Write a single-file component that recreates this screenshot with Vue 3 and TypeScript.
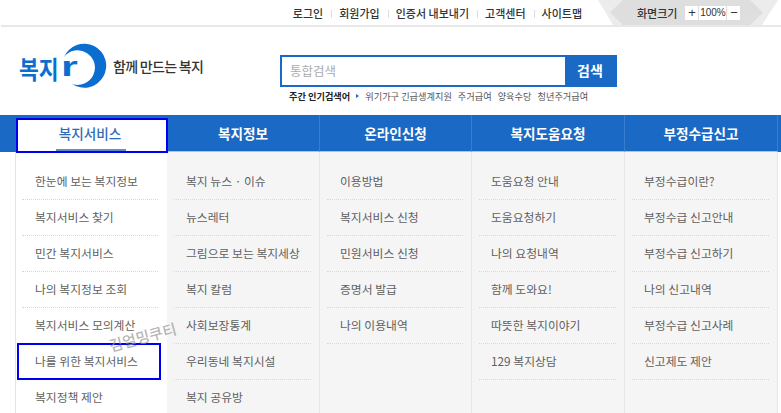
<script setup lang="ts">
const topLinks = ['로그인', '회원가입', '인증서 내보내기', '고객센터', '사이트맵']
const keywords = ['위기가구 긴급생계지원', '주거급여', '양육수당', '청년주거급여']
const columns = [
  { title: '복지서비스', width: 152, items: ['한눈에 보는 복지정보', '복지서비스 찾기', '민간 복지서비스', '나의 복지정보 조회', '복지서비스 모의계산', '나를 위한 복지서비스', '복지정책 제안'] },
  { title: '복지정보', width: 153, items: ['복지 뉴스 · 이슈', '뉴스레터', '그림으로 보는 복지세상', '복지 칼럼', '사회보장통계', '우리동네 복지시설', '복지 공유방'] },
  { title: '온라인신청', width: 152, items: ['이용방법', '복지서비스 신청', '민원서비스 신청', '증명서 발급', '나의 이용내역'] },
  { title: '복지도움요청', width: 153, items: ['도움요청 안내', '도움요청하기', '나의 요청내역', '함께 도와요!', '따뜻한 복지이야기', '129 복지상담'] },
  { title: '부정수급신고', width: 153, items: ['부정수급이란?', '부정수급 신고안내', '부정수급 신고하기', '나의 신고내역', '부정수급 신고사례', '신고제도 제안'] },
]
</script>

<template>
  <div class="page">
    <header class="topbar">
      <nav class="toplinks">
        <a v-for="l in topLinks" :key="l">{{ l }}</a>
      </nav>
      <div class="zoom">
        <svg class="ribbon" width="180" height="25" viewBox="0 0 180 25">
          <polygon points="0,0 180,0 164,25 15,25" fill="#ececec" />
          <polygon points="25,0 152,0 165,12.500 152,25 25,25 12,12.500" fill="#dedede" />
        </svg>
        <span class="zoom-label">화면크기</span>
        <span class="zoom-ctl"><b>+</b><i>100%</i><b>−</b></span>
      </div>
    </header>

    <section class="brand">
      <div class="logo">
        <svg width="95" height="52" viewBox="0 0 95 52">
          <path d="M49 17 A22 22 0 1 1 57 44 A17.300 17.300 0 1 0 49 17 Z" fill="#0a6ed1" />
          <text class="logo-word" transform="translate(4 39) scale(.98 1.12)">복지</text>
          <text class="logo-r" transform="translate(46 36) scale(1.6 1)">r</text>
        </svg>
        <span class="slogan">함께 만드는 복지</span>
      </div>
      <div class="search">
        <div class="search-box">
          <span class="search-input">통합검색</span>
          <span class="search-btn">검색</span>
        </div>
        <div class="popular">
          <strong>주간 인기검색어</strong>
          <em></em>
          <span v-for="k in keywords" :key="k">{{ k }}</span>
        </div>
      </div>
    </section>

    <nav class="gnb">
      <div
        v-for="(c, i) in columns"
        :key="c.title"
        class="gnb-col"
        :class="{ first: i === 0 }"
        :style="{ width: c.width + 'px' }"
      >
        <div class="gnb-title">{{ c.title }}</div>
        <ul class="menu">
          <li v-for="item in c.items" :key="item" :class="{ boxed: item === '나를 위한 복지서비스' }">{{ item }}</li>
        </ul>
      </div>
      <span class="stamp">김얼밍쿠티</span>
    </nav>
  </div>
</template>

<style>
html, body { margin: 0; background: #fff; overflow: hidden; }
</style>

<style scoped>
.page {
  width: 781px;
  height: 413px;
  overflow: hidden;
  font-family: "Noto Sans CJK KR", "Noto Sans", sans-serif;
  color: #444;
}
.topbar {
  height: 27px;
  box-sizing: border-box;
  border-bottom: 2px solid #e8e8e8;
  margin-left: 1px;
  display: flex;
  justify-content: flex-end;
  align-items: center;
}
.toplinks { display: flex; font-size: 11px; font-weight: 500; color: #333; margin-right: 8px; }
.toplinks a { padding: 0 8px; position: relative; }
.toplinks a + a::before {
  content: "";
  position: absolute;
  left: 0;
  top: 5px;
  height: 8px;
  width: 1px;
  background: #ddd;
}
.zoom {
  position: relative;
  width: 180px;
  height: 25px;
  margin-right: 3px;
  display: flex;
  align-items: center;
  gap: 8px;
  padding-left: 39px;
  box-sizing: border-box;
  font-size: 11px;
  font-weight: 500;
  color: #333;
}
.ribbon { position: absolute; left: 0; top: 0; }
.zoom-label, .zoom-ctl { position: relative; }
.zoom-ctl { display: flex; gap: 1px; }
.zoom-ctl b, .zoom-ctl i {
  background: #fff;
  height: 14px;
  line-height: 14px;
  font-style: normal;
  font-weight: 400;
  font-family: "Liberation Sans", sans-serif;
  font-size: 10px;
  text-align: center;
}
.zoom-ctl b { width: 13px; font-size: 13px; }
.zoom-ctl i { width: 27px; }
.brand {
  height: 88px;
  display: flex;
}
.logo {
  display: flex;
  align-items: center;
  gap: 3px;
  margin: 13px 0 0 15px;
  height: 52px;
  width: 265px;
}
.logo-word { font-size: 22px; font-weight: 700; fill: #0a6ed1; }
.logo-r { font-family: "Liberation Sans", sans-serif; font-size: 27px; font-weight: 700; fill: #0a6ed1; }
.slogan { font-size: 14px; font-weight: 500; color: #333; letter-spacing: -0.7px; white-space: nowrap; }
.search { margin-top: 28px; }
.search-box {
  width: 337px;
  height: 32px;
  box-sizing: border-box;
  border: 2px solid #1a69c4;
  display: flex;
}
.search-input {
  flex: 1;
  padding-left: 8px;
  font-size: 12.500px;
  line-height: 28px;
  color: #aaa;
}
.search-btn {
  width: 50px;
  background: #1a69c4;
  color: #fff;
  text-align: center;
  font-size: 14px;
  font-weight: 700;
  line-height: 26px;
}
.popular {
  display: flex;
  align-items: center;
  gap: 6px;
  margin: 2px 0 0 9px;
  font-size: 9.200px;
  color: #555;
  white-space: nowrap;
}
.popular strong { color: #222; }
.popular em {
  width: 0;
  height: 0;
  border-left: 3px solid #1a69c4;
  border-top: 2px solid transparent;
  border-bottom: 2px solid transparent;
}
.gnb {
  display: flex;
  position: relative;
  background: linear-gradient(#1a69c4 37px, #fff 37px);
  height: 298px;
}
.gnb-col {
  flex: none;
  display: flex;
  flex-direction: column;
  box-sizing: border-box;
}
.gnb-col:first-child { margin-left: 15px; }
.gnb-title {
  flex: none;
  height: 37px;
  box-sizing: border-box;
  line-height: 36px;
  text-align: center;
  color: #fff;
  font-size: 13.600px;
  font-weight: 700;
  border-right: 1px solid #3a7dcd;
  border-bottom: 1px solid #a9c5e8;
}
.first .gnb-title {
  position: relative;
  z-index: 1;
  border: 2px solid #0000f0;
  margin: 3px -1px -1px 1px;
  padding-right: 4px;
  height: 35px;
  line-height: 27px;
  color: #2d6db8;
  font-weight: 500;
  background: #fff;
}
.first .gnb-title::after {
  content: "";
  position: absolute;
  left: 38px;
  width: 70px;
  bottom: 0;
  height: 2px;
  background: #5b8fcc;
}
.menu {
  flex: none;
  min-height: 261px;
  box-sizing: border-box;
  list-style: none;
  margin: 0;
  padding: 12px 8px 0 7px;
  background: #f5f5f5;
  border-right: 1px solid #e6e6e6;
}
.first .menu {
  background: #fff;
  border-left: 1px solid #e4e4e4;
  border-right: 0;
  padding-left: 6px;
  padding-right: 9px;
}
.menu li {
  position: relative;
  height: 36px;
  line-height: 34px;
  padding-left: 12px;
  font-size: 11.800px;
  color: #5f5f5f;
  border-bottom: 1px dotted #d8d8d8;
  box-sizing: border-box;
  white-space: nowrap;
}
.first .menu li, .gnb-col:nth-child(3) .menu li { padding-left: 13px; }
.menu li.boxed::after {
  content: "";
  position: absolute;
  left: -5px;
  right: -3px;
  top: -1px;
  bottom: -1px;
  border: 2px solid #0000f0;
}
.stamp {
  position: absolute;
  left: 108px;
  top: 211px;
  font-size: 15px;
  font-weight: 500;
  color: rgba(150, 150, 150, 0.7);
  transform: rotate(-15deg);
}
</style>
